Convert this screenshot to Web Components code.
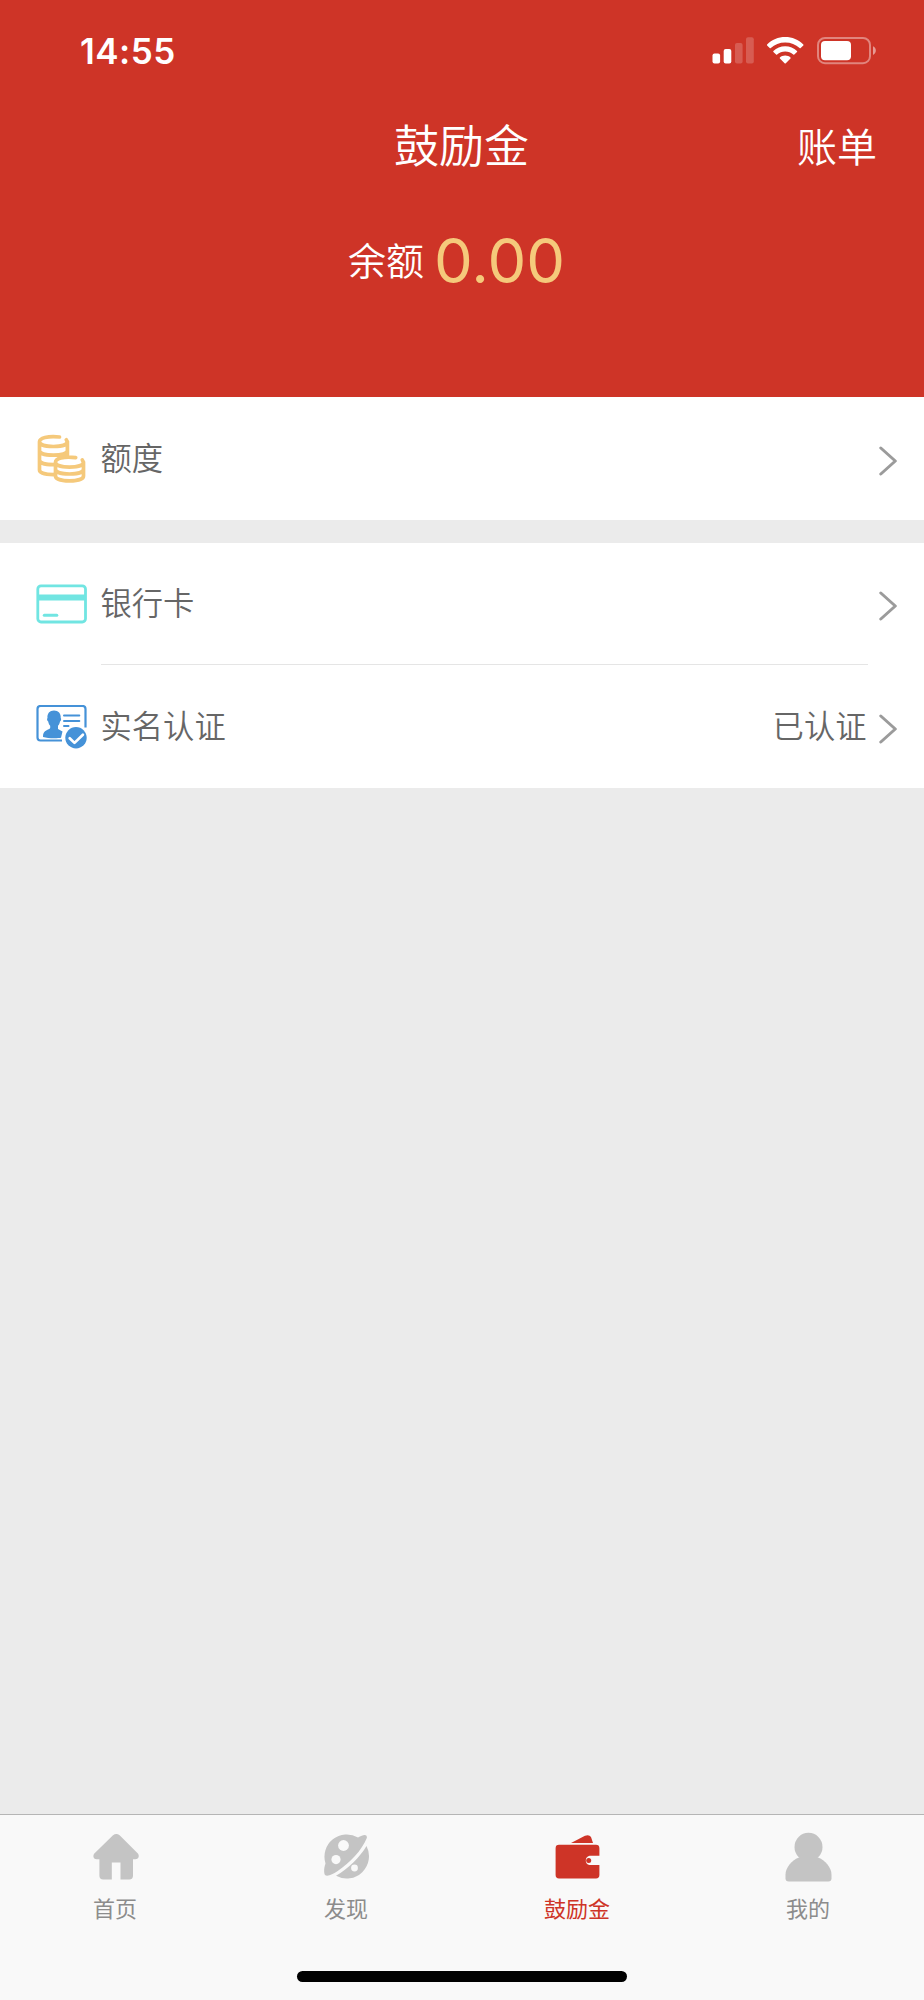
<!DOCTYPE html>
<html lang="zh-CN">
<head>
<meta charset="utf-8">
<title>鼓励金</title>
<style>
html,body{margin:0;padding:0}
body{width:924px;height:2000px;overflow:hidden;background:#ebebeb;font-family:"Noto Sans CJK SC",sans-serif}
</style>
</head>
<body>
<wallet-page></wallet-page>
<script>
const define = (name, html) => customElements.define(name, class extends HTMLElement {
  constructor() {
    super();
    const t = document.createElement('template');
    t.innerHTML = html;
    this.attachShadow({mode: 'open'}).append(t.content.cloneNode(true));
  }
});

define('status-bar', `
<style>
:host{display:flex;align-items:center;height:102px;padding:0 47px 0 80px;color:#fff}
.time{font:600 35px/40px Inter,sans-serif;flex:1;letter-spacing:.5px}
svg{display:block;flex:none}
.signal{margin-right:12px}.wifi{margin-right:13px}
</style>
<span class="time">14:55</span>
<svg class="signal" width="43" height="28" viewBox="712 37 43 28" fill="#fff"><rect x="712.5" y="53.5" width="7.6" height="10" rx="2"/><rect x="723.7" y="49" width="7.6" height="14.5" rx="2"/><rect x="735" y="43" width="7.6" height="20.5" rx="2" opacity=".2"/><rect x="746" y="37.2" width="7.8" height="26.3" rx="2" opacity=".2"/></svg>
<svg class="wifi" width="37" height="28" viewBox="767 37 37 28" fill="#fff"><path d="M785.2 37.1c-7 0-13.4 2.7-18.1 7.3-.3.3-.3.7 0 1l2.6 2.7c.3.3.8.3 1.1 0 3.8-3.6 8.8-5.6 14.4-5.6s10.600 2 14.400 5.600c.3.3.8.3 1.100 0l2.600-2.700c.3-.3.3-.7 0-1-4.700-4.600-11.100-7.300-18.100-7.300z"/><path d="M785.200 46.200c-4.500 0-8.700 1.800-11.800 4.700-.3.3-.3.700 0 1l2.700 2.700c.3.3.7.3 1 0 2.200-2 5-3.100 8.100-3.100s5.900 1.100 8.100 3.100c.3.3.7.3 1 0l2.700-2.700c.3-.3.3-.7 0-1-3.100-2.900-7.300-4.700-11.800-4.700z"/><path d="M785.200 55.500c-2 0-3.900.7-5.300 1.900-.3.3-.3.700 0 1l4.700 4.900c.3.3.9.3 1.200 0l4.700-4.900c.3-.3.3-.7 0-1-1.400-1.200-3.300-1.900-5.300-1.900z"/></svg>
<svg width="60" height="28" viewBox="817 37 60 28"><rect x="818" y="38" width="52" height="25.200" rx="7" fill="none" stroke="#fff" stroke-opacity=".4" stroke-width="2"/><rect x="821" y="41" width="30" height="19.200" rx="4" fill="#fff"/><path d="M873 46.300c3.800 1.600 3.800 7 0 8.600z" fill="#fff" opacity=".5"/></svg>`);

define('nav-bar', `
<style>
:host{display:grid;grid-template-columns:1fr auto 1fr;align-items:center;height:84px;padding:0 47px;color:#fff;font-weight:350}
.title{grid-column:2;font-size:45px;line-height:60px;margin:-1px 1px 0 0}
.action{justify-self:end;font-size:40px;line-height:54px;margin-top:1px}
</style>
<span class="title"><slot></slot></span><span class="action"><slot name="action"></slot></span>`);

define('balance-panel', `
<style>
:host{display:flex;box-sizing:border-box;justify-content:center;align-items:center;height:211px;padding:0 11px 66px 0;color:#fff}
.label{font-size:38px;font-weight:350;line-height:50px;margin:1px 10px 0 0}
.value{font:400 61.5px/90px Inter,sans-serif;color:#f5c97b;margin-top:5px}
</style>
<span class="label"><slot></slot></span><span class="value">0.00</span>`);

define('setting-row', `
<style>
:host{display:flex;align-items:center;height:123px;padding-right:26px;background:#fff;color:#666;font-size:31.3px;font-weight:350;line-height:44px}
.icon{display:flex;width:64.500px;padding-left:36px}
.label{flex:1}
.value{margin-right:12.500px}
.label,.value{margin-top:-4px}
.arrow{display:block;margin-top:4px}
</style>
<span class="icon"><slot name="icon"></slot></span>
<span class="label"><slot></slot></span><span class="value"><slot name="value"></slot></span>
<svg class="arrow" width="19" height="32" viewBox="0 0 19 32" fill="none" stroke="#9b9b9b" stroke-width="3" stroke-linecap="round" stroke-linejoin="round"><path d="M1.800 3 16.300 16 1.800 29"/></svg>`);

define('setting-group', `
<style>:host{display:block;background:#fff}</style><slot></slot>`);

define('row-divider', `
<style>:host{display:block;height:1px;margin:0 56px 0 101px;background:#e5e5e5}</style>`);

define('coins-icon', `
<style>:host{display:block}svg{display:block}</style>
<svg width="50" height="50" viewBox="36 434 50 50" fill="none" stroke="#f5c97b" stroke-width="3.700" stroke-linecap="round"><path d="M59.500 437C47.500 435.700 39.500 438.200 39.500 441.800c0 3 6 4.700 13.900 4.700s14-1.700 14-4.700L66.300 439.800M39.500 442v28c0 2.500 5 4.500 14 4.700M67.400 442v13.500M39.500 450.500c0 3 6 4.700 13.900 4.700s14-1.700 14-4.700M39.500 460c0 3 6 4.700 13.900 4.700M75.700 457.600c-12-1.600-20.200.8-20.200 4.700 0 3 6 4.800 14 4.800s14-1.800 14-4.800L82.300 460M55.500 462.500v13.500c0 3 6 4.900 14 4.900s14-1.900 14-4.900v-13.500M55.500 469.300c0 3 6 4.700 14 4.700s14-1.700 14-4.700"/></svg>`);

define('card-icon', `
<style>:host{display:block}svg{display:block}</style>
<svg width="52" height="40" viewBox="36 583.500 52 40"><rect x="37.800" y="585.300" width="47.700" height="36.200" rx="3.200" fill="none" stroke="#71e5e2" stroke-width="2.800"/><path d="M37 594h49v6H37z" fill="#71e5e2"/><path d="M44.300 614.700h12.500" stroke="#71e5e2" stroke-width="3" stroke-linecap="round"/></svg>`);

define('identity-icon', `
<style>:host{display:block}svg{display:block}</style>
<svg width="52" height="44" viewBox="36 704.500 52 44"><path d="M62 740H40.500a3 3 0 0 1-3-3v-28.500a3 3 0 0 1 3-3h42a3 3 0 0 1 3 3V727" fill="none" stroke="#4592d8" stroke-width="2.200"/><path d="M54 710c-4.300 0-7 3-6.500 7.500-.8.500-.5 3 .7 3.500.3 2 1 3.200 2 4.200v2.300c-1 2-7.200 2-7.200 8v1c3 .9 7 1.200 11 1.200 3.500 0 5.500-.2 7-.5l1.500-6.200-4.500-2.500v-3.300c1-1 1.700-2.200 2-4.200 1.200-.5 1.500-3 .7-3.500.5-4.500-2.400-7.500-6.700-7.500z" fill="#4592d8"/><path d="M64 715h15.300M64 720.400h15.300M64 725.600h4.500" stroke="#4592d8" stroke-width="2" stroke-linecap="round"/><circle cx="76" cy="737.200" r="10.700" fill="#4592d8"/><path d="m69.700 737.700 4.800 4.700 8.400-8.200" fill="none" stroke="#fff" stroke-width="2.700" stroke-linecap="round" stroke-linejoin="round"/></svg>`);

define('tab-item', `
<style>
:host{display:flex;flex:1;flex-direction:column;align-items:center;color:#8c8c8c;font-size:22px;line-height:32px;font-weight:400}
:host([active]){color:#ce3427}
.icon{height:52px;margin:15px 0 9px}
.text{margin-right:1px}
::slotted(svg){display:block}
</style>
<span class="icon"><slot name="icon"></slot></span><span class="text"><slot></slot></span>`);

define('tab-bar', `
<style>
:host{display:flex;flex-direction:column;height:186px;box-sizing:border-box;border-top:1px solid #b5b5b5;background:#f9f9f9}
.tabs{display:flex}
.home{width:330px;height:11px;border-radius:6px;background:#000;margin:auto auto 18px}
</style>
<div class="tabs"><slot></slot></div><div class="home"></div>`);

define('wallet-page', `
<style>
:host{display:flex;flex-direction:column;width:924px;height:2000px;background:#ebebeb}
header{height:397px;background:#ce3427}
setting-group{margin-bottom:23px}
tab-bar{margin-top:auto}
.first{height:121px}
svg{display:block}
</style>
<header><status-bar></status-bar><nav-bar>鼓励金<span slot="action">账单</span></nav-bar><balance-panel>余额</balance-panel></header>
<main>
<setting-group><setting-row><coins-icon slot="icon"></coins-icon>额度</setting-row></setting-group>
<setting-group><setting-row class="first"><card-icon slot="icon"></card-icon>银行卡</setting-row><row-divider></row-divider>
<setting-row><identity-icon slot="icon"></identity-icon>实名认证<span slot="value">已认证</span></setting-row></setting-group>
</main>
<tab-bar>
<tab-item><svg slot="icon" width="50" height="52" viewBox="91 1830 50 52" fill="#c4c4c4"><path d="M113 1835.300q3.300-2.500 6.600 0l18.500 18.500c1.500 2.500.4 5.400-2.600 5.400H133v16.500q0 3.700-3.700 3.700H120.500v-17H111.800v17h-8.700q-3.700 0-3.700-3.700v-16.500H96.500c-3 0-3.900-2.900-2.400-5.400z"/></svg>首页</tab-item>
<tab-item><svg slot="icon" width="50" height="52" viewBox="322 1830 50 52"><g fill="#c4c4c4"><path d="M358 1837.500A22.300 22.300 0 0 0 325.500 1863.500C323.500 1869 324 1873.500 325 1875C327.500 1877 333 1874 337 1871.500C350 1863 362 1850 366.800 1838C367.500 1834.300 364 1833.700 358 1837.500z"/><path d="M366.500 1846A22.300 22.300 0 0 1 336 1875.800C348 1869 360 1857 366.500 1846z"/></g><g fill="#f9f9f9"><circle cx="343.500" cy="1845.500" r="5.400"/><circle cx="336" cy="1859.600" r="4.600"/><circle cx="354.500" cy="1868" r="3.400"/></g></svg>发现</tab-item>
<tab-item active><svg slot="icon" width="50" height="52" viewBox="553 1830 50 52" fill="#ce3427"><path d="M571 1843l14-7.300q4.200-1.500 6 1.300l2 6z"/><path d="M559 1844.800h37q3.400 0 3.400 3.400v7.600H589.500a5.200 4.800 0 0 0 0 9.200h9.900v10q0 3.400-3.400 3.400h-37q-3.400 0-3.400-3.400v-26.800q0-3.400 3.400-3.400z"/><circle cx="588.700" cy="1860.400" r="2.500"/></svg>鼓励金</tab-item>
<tab-item><svg slot="icon" width="50" height="52" viewBox="783.500 1830 50 52" fill="#c4c4c4"><ellipse cx="808" cy="1847" rx="14" ry="14.300"/><path d="M799 1857.200c-8 3-14 10.500-14 17.500v3.500q0 3.300 3.300 3.300h39.500q3.200 0 3.200-3.300v-3.500c0-7-6-14.500-14-17.500z"/></svg>我的</tab-item>
</tab-bar>`);
</script>
</body>
</html>
